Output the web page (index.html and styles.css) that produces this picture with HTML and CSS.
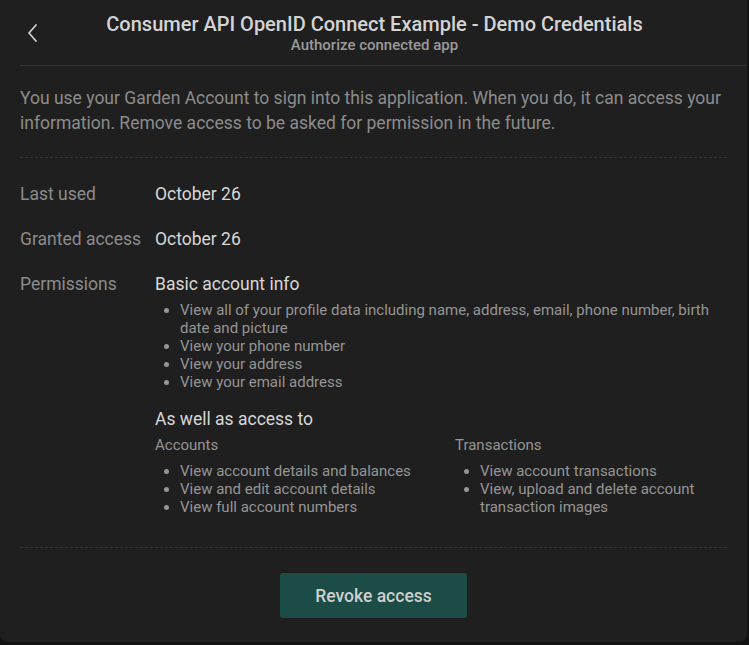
FILE: index.html
```html
<!DOCTYPE html>
<html lang="en">
<head>
<meta charset="utf-8">
<title>Authorize connected app</title>
<link rel="stylesheet" href="styles.css">
</head>
<body>
<div class="card">
  <header class="header">
    <button class="back" aria-label="Back">
      <svg width="20" height="20" viewBox="0 0 20 20"><polyline points="12,2 5,10 12,18" fill="none" stroke="#cfcfcf" stroke-width="1.8" stroke-linecap="round" stroke-linejoin="round"/></svg>
    </button>
    <div class="titles">
      <h1 class="title">Consumer API OpenID Connect Example - Demo Credentials</h1>
      <div class="subtitle">Authorize connected app</div>
    </div>
  </header>
  <main class="body">
    <p class="intro">You use your Garden Account to sign into this application. When you do, it can access your information. Remove access to be asked for permission in the future.</p>
    <div class="details">
      <div class="row">
        <div class="label">Last used</div>
        <div class="value">October 26</div>
      </div>
      <div class="row">
        <div class="label">Granted access</div>
        <div class="value">October 26</div>
      </div>
      <div class="row">
        <div class="label">Permissions</div>
        <div class="value">
          <div>Basic account info</div>
          <ul class="list">
            <li>View all of your profile data including name, address, email, phone number, birth date and picture</li>
            <li>View your phone number</li>
            <li>View your address</li>
            <li>View your email address</li>
          </ul>
          <div class="also">As well as access to</div>
          <div class="scopes">
            <div class="scope">
              <div class="scope-name">Accounts</div>
              <ul class="list">
                <li>View account details and balances</li>
                <li>View and edit account details</li>
                <li>View full account numbers</li>
              </ul>
            </div>
            <div class="scope">
              <div class="scope-name">Transactions</div>
              <ul class="list">
                <li>View account transactions</li>
                <li>View, upload and delete account transaction images</li>
              </ul>
            </div>
          </div>
        </div>
      </div>
    </div>
    <div class="actions">
      <button class="revoke">Revoke access</button>
    </div>
  </main>
</div>
</body>
</html>
```
FILE: styles.css
```css
html, body {
  margin: 0;
  padding: 0;
  background: #121212;
}
body {
  font-family: Roboto, "Noto Sans", sans-serif;
  width: 749px;
  height: 645px;
  overflow: hidden;
}
.card {
  width: 747px;
  height: 642px;
  background: #1f1f1f;
  border-radius: 0 0 8px 8px;
  box-sizing: border-box;
}
.header {
  display: flex;
  align-items: flex-start;
  height: 66px;
  margin-left: 20px;
  border-bottom: 1px solid #353535;
  box-sizing: border-box;
}
.back {
  background: none;
  border: 0;
  padding: 0;
  margin: 23px 0 0 4px;
  width: 20px;
  height: 20px;
  display: flex;
}
.titles {
  flex: 1;
  text-align: center;
  padding-top: 12px;
  padding-right: 42px;
}
.title {
  margin: 0;
  font-size: 20px;
  font-weight: 500;
  line-height: 24px;
  color: #d4d4d4;
}
.subtitle {
  font-size: 15px;
  font-weight: 500;
  line-height: 18px;
  color: #9a9a9a;
}
.body {
  padding: 20px 20px 0 20px;
}
.intro {
  margin: 0;
  font-size: 17.5px;
  line-height: 25px;
  color: #8c8c8c;
  padding-bottom: 21px;
  border-bottom: 1px dashed #353535;
}
.details {
  padding: 24px 0 31px;
  border-bottom: 1px dashed #353535;
  display: flex;
  flex-direction: column;
  gap: 21px;
}
.row {
  display: flex;
  font-size: 17.5px;
  line-height: 24px;
}
.label {
  width: 135px;
  flex: none;
  color: #8c8c8c;
}
.value {
  flex: 1;
  color: #d8d8d8;
}
.list {
  margin: 5px 0 0;
  padding-left: 25px;
  font-size: 15px;
  line-height: 18px;
  color: #959595;
}
.also {
  margin-top: 16px;
}
.scopes {
  display: grid;
  grid-template-columns: 300px 1fr;
  margin-top: 4px;
}
.scope-name {
  font-size: 15px;
  line-height: 20px;
  color: #959595;
}
.scope .list {
  margin-top: 7px;
}
.actions {
  display: flex;
  justify-content: center;
  padding-top: 25px;
}
.revoke {
  width: 187px;
  height: 45px;
  background: #1c4c46;
  border: 0;
  border-radius: 3px;
  font-family: Roboto, "Noto Sans", sans-serif;
  font-size: 17.5px;
  font-weight: 500;
  color: #cfcfcf;
}
```
